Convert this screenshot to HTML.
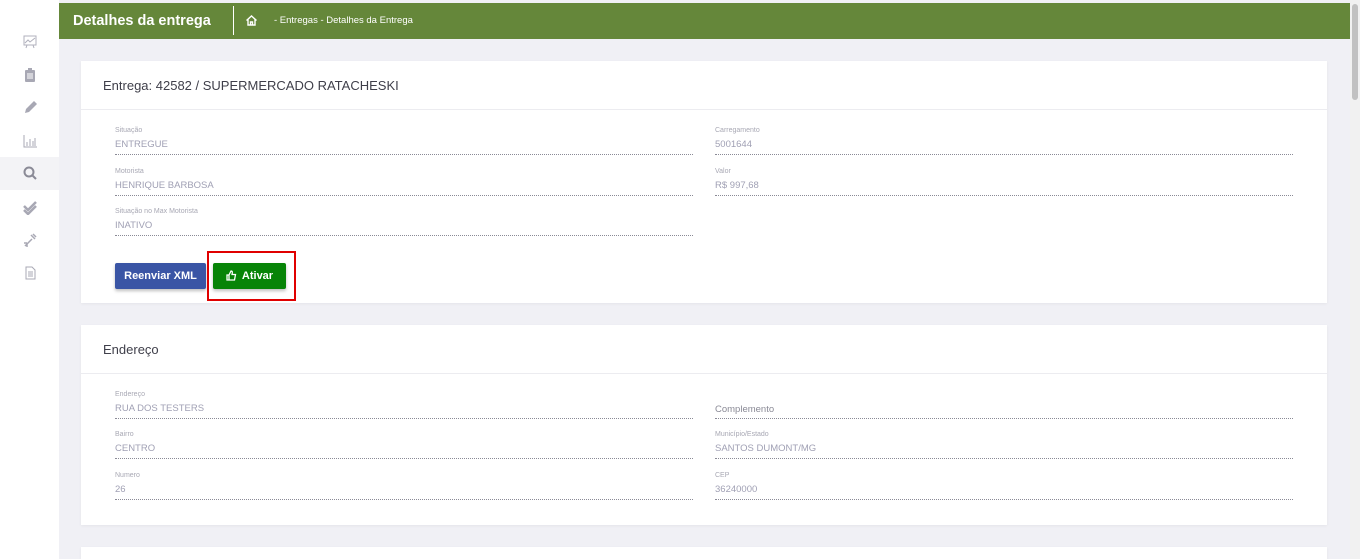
<!DOCTYPE html>
<html><head><meta charset="utf-8"><style>
*{margin:0;padding:0;box-sizing:border-box}
html,body{width:1360px;height:559px;overflow:hidden}
body{background:#f0f0f5;font-family:"Liberation Sans",sans-serif;position:relative}
.side{position:absolute;left:0;top:0;width:59px;height:559px;background:#fff}
.side .ic{position:absolute;left:22px;width:16px;height:16px;color:#b0b0bc}
.side .act{position:absolute;left:0;top:157px;width:59px;height:33px;background:#f3f3f6}
.hdr{position:absolute;left:59px;top:3px;width:1291px;height:36px;background:#65873a;color:#fff}
.hdr .t{position:absolute;left:14px;top:10px;font-size:14.5px;font-weight:bold}
.hdr .sep{position:absolute;left:174px;top:3px;width:1px;height:29px;background:#fff}
.hdr .bc{position:absolute;left:215px;top:12px;font-size:9.5px}
.sb{position:absolute;left:1350px;top:0;width:10px;height:559px;background:#f1f1f1}
.sb div{position:absolute;left:2px;top:4px;width:6px;height:96px;background:#c1c1c1;border-radius:3px}
.card{position:absolute;left:81px;width:1246px;background:#fff;box-shadow:0 1px 3px rgba(0,0,0,.05)}
.card h3{font-weight:normal;font-size:13px;color:#3f3f4a;padding:17px 22px;height:49px;border-bottom:1px solid #ececf0}
.f{position:absolute;width:578px;border-bottom:1px dotted #8a8a96;height:28px}
.f .l{font-size:7px;color:#a8a8b4;position:absolute;top:0}
.f .v{font-size:9.5px;color:#a0a0b4;position:absolute;top:12px}
.btn{position:absolute;height:26px;color:#fff;font-size:11px;font-weight:bold;border-radius:2px;box-shadow:0 2px 3px rgba(0,0,0,.25);text-align:center;line-height:26px}
</style></head><body>
<div class="side">
<div class="act"></div>
<svg class="ic" style="top:33px" viewBox="0 0 16 16" fill="none" stroke="#b0b0bc"><rect x="2" y="3" width="12" height="9"/><path d="M3 10l3-3 2 2 5-4M5 12l-1 3M11 12l1 3"/></svg>
<svg class="ic" style="top:67px" viewBox="0 0 16 16"><rect x="3" y="3" width="10" height="12" rx="1" fill="#a8a8b4"/><rect x="6" y="1" width="4" height="3" fill="#a8a8b4"/><path d="M5 7h6M5 9h6M5 11h6" stroke="#fff"/></svg>
<svg class="ic" style="top:100px" viewBox="0 0 16 16"><path d="M3 13l1-4 8-8 3 3-8 8z" fill="#a8a8b4"/></svg>
<svg class="ic" style="top:133px" viewBox="0 0 16 16" fill="none" stroke="#a8a8b4"><path d="M2 2v12h13M5 13V9M8 13V6M11 13V8M13 13V5"/></svg>
<svg class="ic" style="top:165px" viewBox="0 0 16 16" fill="none" stroke="#8a8a96" stroke-width="2"><circle cx="7" cy="7" r="4.5"/><path d="M10 10l4 4"/></svg>
<svg class="ic" style="top:199px" viewBox="0 0 16 16" fill="none" stroke="#a8a8b4" stroke-width="2.5"><path d="M2 7l4 4 8-8M2 11l4 4 8-8" /></svg>
<svg class="ic" style="top:232px" viewBox="0 0 16 16" fill="none" stroke="#a8a8b4" stroke-width="1.5"><path d="M3 14l7-7M9 3l4 4M11 2l3 3M2 11h3M5 15v-3"/></svg>
<svg class="ic" style="top:265px" viewBox="0 0 16 16" fill="none" stroke="#a8a8b4"><path d="M4 2h6l3 3v9H4z M6 7h5M6 9h5M6 11h5"/></svg>
</div>
<div class="hdr"><div class="t">Detalhes da entrega</div><div class="sep"></div>
<svg style="position:absolute;left:186px;top:11px" width="13" height="13" viewBox="0 0 13 13" fill="none" stroke="#fff" stroke-width="1.4"><path d="M1.5 6.5L6.5 2l5 4.5M3 5.5V11h7V5.5M5.5 11V8h2v3"/></svg>
<div class="bc">- Entregas - Detalhes da Entrega</div></div>
<div class="sb"><div></div></div>

<div class="card" style="top:61px;height:242px">
<h3>Entrega: 42582 / SUPERMERCADO RATACHESKI</h3>
<div class="f" style="left:34px;top:66px"><div class="l">Situação</div><div class="v">ENTREGUE</div></div>
<div class="f" style="left:634px;top:66px"><div class="l">Carregamento</div><div class="v">5001644</div></div>
<div class="f" style="left:34px;top:107px"><div class="l">Motorista</div><div class="v">HENRIQUE BARBOSA</div></div>
<div class="f" style="left:634px;top:107px"><div class="l">Valor</div><div class="v">R$ 997,68</div></div>
<div class="f" style="left:34px;top:147px"><div class="l">Situação no Max Motorista</div><div class="v">INATIVO</div></div>
<div class="btn" style="left:34px;top:202px;width:91px;background:#3a55a5">Reenviar XML</div>
<div style="position:absolute;left:126px;top:190px;width:89px;height:50px;border:2px solid #e00000"></div>
<div class="btn" style="left:132px;top:202px;width:73px;background:#078407"><svg style="vertical-align:-2px;margin-right:5px" width="11" height="11" viewBox="0 0 11 11" fill="none" stroke="#fff" stroke-width="1.3"><path d="M1 5h2v5H1zM3 5l2-4c1 0 1.5.5 1.3 2L6 4.5h3.5L8.5 10H3"/></svg>Ativar</div>
</div>

<div class="card" style="top:325px;height:200px">
<h3>Endereço</h3>
<div class="f" style="left:34px;top:66px"><div class="l">Endereço</div><div class="v">RUA DOS TESTERS</div></div>
<div class="f" style="left:634px;top:66px"><div class="v" style="top:13px;color:#8a8a96">Complemento</div></div>
<div class="f" style="left:34px;top:106px"><div class="l">Bairro</div><div class="v">CENTRO</div></div>
<div class="f" style="left:634px;top:106px"><div class="l">Município/Estado</div><div class="v">SANTOS DUMONT/MG</div></div>
<div class="f" style="left:34px;top:147px"><div class="l">Numero</div><div class="v">26</div></div>
<div class="f" style="left:634px;top:147px"><div class="l">CEP</div><div class="v">36240000</div></div>
</div>
<div class="card" style="top:547px;height:12px"></div>
</body></html>
